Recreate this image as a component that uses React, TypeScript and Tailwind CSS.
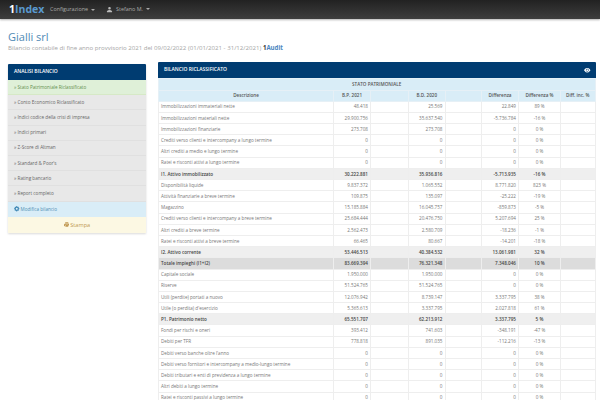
import { BsEyeFill, BsGearFill, BsPersonFill, BsPrinterFill } from 'react-icons/bs';

type Row = { label: string; bp: string; bd: string; diff: string; pct: string; kind?: 'sub' | 'total' };

const zero = (label: string): Row => ({ label, bp: '0', bd: '0', diff: '0', pct: '0 %' });

const rows: Row[] = [
  { label: 'Immobilizzazioni immateriali nette', bp: '48.418', bd: '25.569', diff: '22.849', pct: '89 %' },
  { label: 'Immobilizzazioni materiali nette', bp: '29.900.756', bd: '35.637.540', diff: '-5.736.784', pct: '-16 %' },
  { label: 'Immobilizzazioni finanziarie', bp: '273.708', bd: '273.708', diff: '0', pct: '0 %' },
  zero('Crediti verso clienti e intercompany a lungo termine'),
  zero('Altri crediti a medio e lungo termine'),
  zero('Ratei e risconti attivi a lungo termine'),
  { label: 'I1. Attivo immobilizzato', bp: '30.222.881', bd: '35.936.816', diff: '-5.713.935', pct: '-16 %', kind: 'sub' },
  { label: 'Disponibilità liquide', bp: '9.837.372', bd: '1.065.552', diff: '8.771.820', pct: '823 %' },
  { label: 'Attività finanziarie a breve termine', bp: '109.875', bd: '135.097', diff: '-25.222', pct: '-19 %' },
  { label: 'Magazzino', bp: '15.185.884', bd: '16.045.757', diff: '-859.873', pct: '-5 %' },
  { label: 'Crediti verso clienti e intercompany a breve termine', bp: '25.684.444', bd: '20.476.750', diff: '5.207.694', pct: '25 %' },
  { label: 'Altri crediti a breve termine', bp: '2.562.473', bd: '2.580.709', diff: '-18.236', pct: '-1 %' },
  { label: 'Ratei e risconti attivi a breve termine', bp: '66.465', bd: '80.667', diff: '-14.201', pct: '-18 %' },
  { label: 'I2. Attivo corrente', bp: '53.446.513', bd: '40.384.532', diff: '13.061.981', pct: '32 %', kind: 'sub' },
  { label: 'Totale impieghi (I1+I2)', bp: '83.669.394', bd: '76.321.348', diff: '7.348.046', pct: '10 %', kind: 'total' },
  { label: 'Capitale sociale', bp: '1.950.000', bd: '1.950.000', diff: '0', pct: '0 %' },
  { label: 'Riserve', bp: '51.524.765', bd: '51.524.765', diff: '0', pct: '0 %' },
  { label: 'Utili (perdite) portati a nuovo', bp: '12.076.942', bd: '8.739.147', diff: '3.337.795', pct: '38 %' },
  { label: "Utile (o perdita) d'esercizio", bp: '5.365.613', bd: '3.337.795', diff: '2.027.818', pct: '61 %' },
  { label: 'P1. Patrimonio netto', bp: '65.551.707', bd: '62.213.912', diff: '3.337.795', pct: '5 %', kind: 'sub' },
  { label: 'Fondi per rischi e oneri', bp: '393.412', bd: '741.603', diff: '-348.191', pct: '-47 %' },
  { label: 'Debiti per TFR', bp: '778.818', bd: '891.035', diff: '-112.216', pct: '-13 %' },
  zero("Debiti verso banche oltre l'anno"),
  zero('Debiti verso fornitori e intercompany a medio-lungo termine'),
  zero('Debiti tributari e enti di previdenza a lungo termine'),
  zero('Altri debiti a lungo termine'),
  zero('Ratei e risconti passivi a lungo termine'),
];

const menu = [
  'Conto Economico Riclassificato',
  'Indici codice della crisi di impresa',
  'Indici primari',
  'Z-Score di Altman',
  'Standard & Poor\'s',
  'Rating bancario',
  'Report completo',
];

const Caret = () => <span className="inline-block border-x-[2px] border-t-[2px] border-x-transparent border-t-[#aaa] ml-[3px] align-middle" />;

const MenuItem = ({ label }: { label: string }) => (
  <div className="h-[15.2px] flex items-center pl-[6px] bg-[#e8e8e8] border-b border-[#e0e0e0] text-[4.65px] text-[#666]">» {label}</div>
);

const headCell = 'border border-[#e6f0f6] bg-[#d9edf7] font-semibold text-[#555] text-center';

export default function App() {
  return (
    <div className="h-[400px] w-[600px] overflow-hidden bg-white text-[4.6px] text-[#777]" style={{ fontFamily: '"Open Sans", sans-serif' }}>
      {/* navbar */}
      <div className="h-[19px] bg-gradient-to-b from-[#222222] to-[#3e3e3e] flex items-center pl-[9px] shadow-[0_1px_2px_rgba(0,0,0,0.3)]">
        <span className="w-[31px] text-[10.5px] font-bold leading-none whitespace-nowrap">
          <span className="text-white">1</span><span className="text-[#5a9ad0]">Index</span>
        </span>
        <span className="ml-[10px] text-[5.4px] text-[#aaa]">Configurazione<Caret /></span>
        <span className="ml-[11px] text-[5.4px] text-[#aaa] flex items-center">
          <BsPersonFill className="text-[7px] mr-[3px] text-[#bbb]" />Stefano M.<Caret />
        </span>
      </div>

      <div className="pl-[8px] pr-[4px]">
        <h1 className="mt-[11px] text-[11px] leading-[13px] text-[#4f8ab5]">Gialli srl</h1>
        <p className="mt-[1px] text-[6.1px] leading-[8px] text-[#a5a5a5]">
          Bilancio contabile di fine anno provvisorio 2021 del 09/02/2022 (01/01/2021 - 31/12/2021){' '}
          <b className="text-[#333]">1</b><b className="text-[#4a86c0]">Audit</b>
        </p>

        <div className="flex items-start mt-[10px]">
          {/* sidebar */}
          <div className="w-[138px] mt-[2px] shrink-0 shadow-[0_1px_2px_rgba(0,0,0,0.15)]">
            <div className="h-[16px] bg-[#003c71] text-white text-[5px] font-semibold flex items-center pl-[6px] rounded-t-[1px]">ANALISI BILANCIO</div>
            <div className="h-[15.2px] flex items-center pl-[6px] bg-[#dff0d8] border-b border-[#d6e9c6] text-[4.65px] text-[#5f8f4e]">» Stato Patrimoniale Riclassificato</div>
            {menu.map((m) => <MenuItem key={m} label={m} />)}
            <div className="h-[15.4px] flex items-center pl-[6px] bg-[#d9edf7] text-[4.65px] text-[#4f8fb5]">
              <BsGearFill className="text-[5.5px] mr-[1px] text-[#3f88b5]" /> Modifica bilancio
            </div>
            <div className="h-[16px] flex items-center justify-center bg-[#fcf8e3] text-[#c09853] text-[5.6px]">
              <BsPrinterFill className="text-[5.5px] mr-[1px]" /> Stampa
            </div>
          </div>

          {/* table panel */}
          <div className="ml-[12px] w-[437.5px] shrink-0">
            <div className="h-[16px] bg-[#003c71] text-white text-[5px] font-semibold flex items-center justify-between pl-[6px] pr-[5px] rounded-t-[1px]">
              <span>BILANCIO RICLASSIFICATO</span>
              <BsEyeFill className="text-[6.5px]" />
            </div>
            <table className="w-full table-fixed border-collapse">
              <colgroup>
                <col className="w-[175px]" />
                <col className="w-[37px]" />
                <col className="w-[38px]" />
                <col className="w-[36.5px]" />
                <col className="w-[36.5px]" />
                <col className="w-[37px]" />
                <col className="w-[42px]" />
                <col />
              </colgroup>
              <thead>
                <tr className="h-[11.5px]">
                  <th colSpan={8} className={`${headCell} font-normal`}>STATO PATRIMONIALE</th>
                </tr>
                <tr className="h-[11.2px]">
                  <th className={headCell}>Descrizione</th>
                  <th className={headCell}>B.P. 2021</th>
                  <th className={headCell} />
                  <th className={headCell}>B.D. 2020</th>
                  <th className={headCell} />
                  <th className={headCell}>Differenza</th>
                  <th className={headCell}>Differenza %</th>
                  <th className={headCell}>Diff. inc. %</th>
                </tr>
              </thead>
              <tbody>
                {rows.map((r) => {
                  const bg = r.kind === 'total' ? 'bg-[#dcdcdc] text-[#444] font-semibold' : r.kind === 'sub' ? 'bg-[#efefef] text-[#444] font-semibold' : '';
                  const cell = 'border border-[#eeeeee] px-[2px] whitespace-nowrap overflow-hidden leading-none';
                  return (
                    <tr key={r.label} className={`h-[11.2px] ${bg}`}>
                      <td className={cell}>{r.label}</td>
                      <td className={`${cell} text-right`}>{r.bp}</td>
                      <td className={cell} />
                      <td className={`${cell} text-right`}>{r.bd}</td>
                      <td className={cell} />
                      <td className={`${cell} text-right`}>{r.diff}</td>
                      <td className={`${cell} text-center`}>{r.pct}</td>
                      <td className={cell} />
                    </tr>
                  );
                })}
              </tbody>
            </table>
          </div>
        </div>
      </div>
    </div>
  );
}
